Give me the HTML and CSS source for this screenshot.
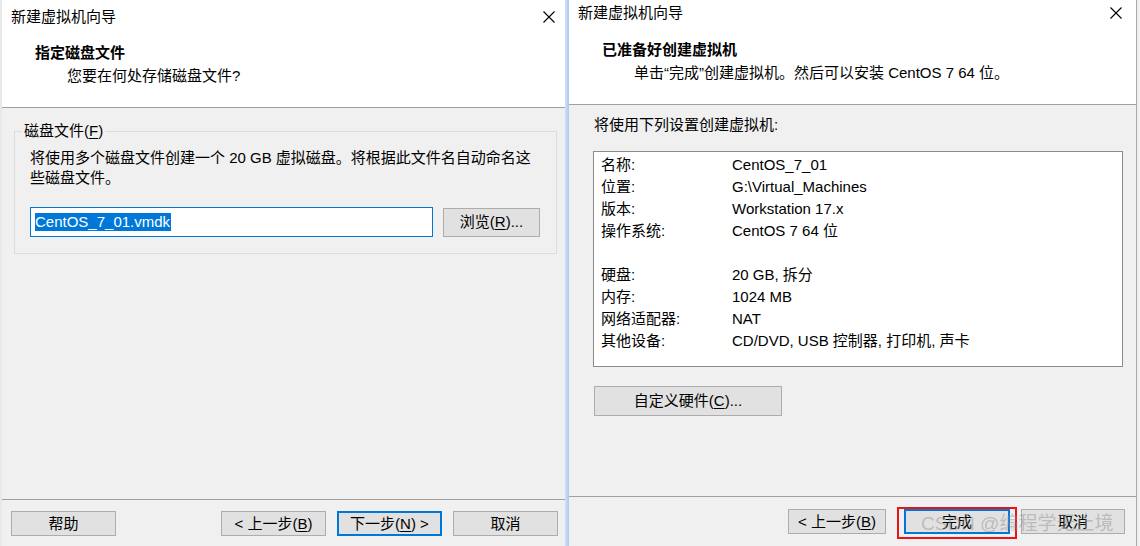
FILE: index.html
```html
<html>
    <head>
        <meta charset="utf-8">
        <link rel="stylesheet" href="styles.css">
    </head>
    <body>
        <div class="strip"></div>

        <div class="dialog left">
            <div class="titlebar">
                <span>新建虚拟机向导</span>
                <svg class="close" width="12" height="12" viewBox="0 0 12 12"><path d="M0.5 0.5 L11.5 11.5 M11.5 0.5 L0.5 11.5" stroke="#000" stroke-width="1.1" fill="none"/></svg>
            </div>
            <div class="header">
                <div class="heading">指定磁盘文件</div>
                <div class="subtitle">您要在何处存储磁盘文件?</div>
            </div>
            <div class="body">
                <fieldset class="group">
                    <legend>磁盘文件(<u>F</u>)</legend>
                    <p>将使用多个磁盘文件创建一个 20 GB 虚拟磁盘。将根据此文件名自动命名这<br>些磁盘文件。</p>
                    <div class="file-row">
                        <div class="textbox"><span class="selected">CentOS_7_01.vmdk</span></div>
                        <div class="btn browse">浏览(<u>R</u>)...</div>
                    </div>
                </fieldset>
            </div>
            <div class="footer">
                <div class="btn">帮助</div>
                <div class="spacer"></div>
                <div class="btn">&lt; 上一步(<u>B</u>)</div>
                <div class="btn default">下一步(<u>N</u>) &gt;</div>
                <div class="btn">取消</div>
            </div>
        </div>

        <div class="shadow"></div>

        <div class="dialog right">
            <div class="titlebar">
                <span>新建虚拟机向导</span>
                <svg class="close" width="12" height="12" viewBox="0 0 12 12"><path d="M0.5 0.5 L11.5 11.5 M11.5 0.5 L0.5 11.5" stroke="#000" stroke-width="1.1" fill="none"/></svg>
            </div>
            <div class="header">
                <div class="heading">已准备好创建虚拟机</div>
                <div class="subtitle">单击“完成”创建虚拟机。然后可以安装 CentOS 7 64 位。</div>
            </div>
            <div class="body">
                <div class="intro">将使用下列设置创建虚拟机:</div>
                <div class="summary">
                    <div class="row"><span>名称:</span><span>CentOS_7_01</span></div>
                    <div class="row"><span>位置:</span><span>G:\Virtual_Machines</span></div>
                    <div class="row"><span>版本:</span><span>Workstation 17.x</span></div>
                    <div class="row"><span>操作系统:</span><span>CentOS 7 64 位</span></div>
                    <div class="row"><span></span><span></span></div>
                    <div class="row"><span>硬盘:</span><span>20 GB, 拆分</span></div>
                    <div class="row"><span>内存:</span><span>1024 MB</span></div>
                    <div class="row"><span>网络适配器:</span><span>NAT</span></div>
                    <div class="row"><span>其他设备:</span><span>CD/DVD, USB 控制器, 打印机, 声卡</span></div>
                </div>
                <div class="btn customize">自定义硬件(<u>C</u>)...</div>
            </div>
            <div class="footer">
                <div class="spacer"></div>
                <div class="btn back">&lt; 上一步(<u>B</u>)</div>
                <div class="btn default finish">完成</div>
                <div class="btn cancel">取消</div>
            </div>
        </div>

        <div class="edge"></div>

        <div class="mark"></div>
        <div class="watermark">CSDN @编程学无止境</div>
    </body>
</html>
```

FILE: styles.css
```css
html, body {
    margin: 0;
    padding: 0;
}
body {
    width: 1140px;
    height: 546px;
    overflow: hidden;
    display: flex;
    background: #f0f0f0;
    font-family: "Liberation Sans", "Noto Sans CJK SC", sans-serif;
    font-size: 15px;
    color: #000;
    position: relative;
}
u {
    text-decoration: underline;
    text-underline-offset: 2px;
}
.strip {
    width: 2px;
    background: #e8e8e8;
}
.shadow {
    width: 4px;
    background: linear-gradient(to right, #cfe0f7, #a9c8f2);
}
.edge {
    width: 3px;
    border-left: 1px solid #a8a8a8;
    background: #f0f0f0;
}
.dialog {
    display: flex;
    flex-direction: column;
    height: 546px;
    background: #f0f0f0;
}
.dialog.left {
    width: 563px;
}
.dialog.right {
    width: 567px;
}

/* title + header (white) */
.titlebar {
    display: flex;
    justify-content: space-between;
    align-items: center;
    height: 26px;
    padding: 0 14px 0 9px;
    background: #fff;
    line-height: 20px;
}
.left .titlebar {
    height: 34px;
    padding-right: 10px;
}
.close {
    display: block;
}
.header {
    background: #fff;
    padding: 13px 0 20px;
    border-bottom: 1px solid #a0a0a0;
    line-height: 22px;
}
.left .header {
    padding-top: 8px;
}
.heading {
    font-weight: bold;
    padding-left: 33px;
    margin-bottom: 1px;
}
.subtitle {
    padding-left: 65px;
}

/* buttons */
.btn {
    box-sizing: border-box;
    height: 25px;
    width: 105px;
    border: 1px solid #adadad;
    background: #e1e1e1;
    display: flex;
    align-items: center;
    justify-content: center;
    line-height: 20px;
}
.btn.default {
    border: 2px solid #0078d7;
}

/* left body */
.body {
    line-height: 20px;
}
.group {
    margin: 12px 0 0 12px;
    width: 543px;
    box-sizing: border-box;
    border: 1px solid #dcdcdc;
    padding: 0 15px 16px;
}
.group legend {
    padding: 0 2px;
    margin-left: -8px;
    line-height: 22px;
}
.group p {
    margin: 6px 0 0;
}
.file-row {
    display: flex;
    align-items: center;
    gap: 10px;
    margin-top: 19px;
}
.textbox {
    box-sizing: border-box;
    width: 403px;
    height: 30px;
    border: 1px solid #0078d7;
    background: #fff;
    display: flex;
    align-items: center;
    padding-left: 4px;
}
.selected {
    background: #0078d7;
    color: #fff;
    line-height: 18px;
    padding-right: 1px;
}
.btn.browse {
    width: 97px;
    height: 29px;
}

/* footer */
.footer {
    margin-top: auto;
    border-top: 1px solid #a0a0a0;
    display: flex;
    gap: 11px;
    padding: 11px 7px 10px 9px;
}
.spacer {
    flex: 1;
}
.right .footer {
    padding: 12px 11px 12px 0;
    gap: 0;
}
.btn.back {
    width: 98px;
}
.btn.finish {
    width: 106px;
    margin-left: 18px;
}
.btn.cancel {
    width: 104px;
    margin-left: 11px;
}

/* right body */
.intro {
    padding: 10px 0 0 25px;
}
.summary {
    margin: 16px 0 0 24px;
    width: 530px;
    height: 216px;
    box-sizing: border-box;
    border: 1px solid #8c8c8c;
    background: #fff;
    padding: 2px 7px;
}
.row {
    display: flex;
    height: 22px;
    line-height: 22px;
}
.row span:first-child {
    width: 131px;
}
.btn.customize {
    width: 188px;
    height: 30px;
    margin: 19px 0 0 25px;
}

/* annotation overlays */
.mark {
    position: absolute;
    left: 897px;
    top: 507px;
    width: 116px;
    height: 28px;
    border: 2px solid #e8141a;
}
.watermark {
    position: absolute;
    left: 921px;
    top: 511px;
    font-size: 19px;
    line-height: 26px;
    color: rgba(140, 140, 140, 0.45);
    white-space: nowrap;
    font-family: "Liberation Sans", "Noto Sans CJK SC", sans-serif;
}
```
